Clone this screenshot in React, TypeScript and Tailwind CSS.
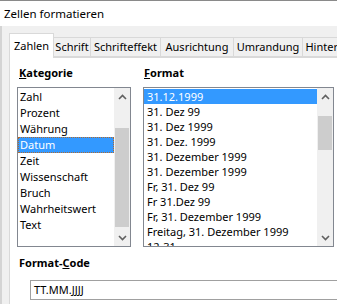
const kategorien = ["Zahl", "Prozent", "Währung", "Datum", "Zeit", "Wissenschaft", "Bruch", "Wahrheitswert", "Text"];
const formate = [
  "31.12.1999",
  "31. Dez 99",
  "31. Dez 1999",
  "31. Dez. 1999",
  "31. Dezember 1999",
  "31. Dezember 1999",
  "Fr, 31. Dez 99",
  "Fr 31.Dez 99",
  "Fr, 31. Dezember 1999",
  "Freitag, 31. Dezember 1999",
  "12-31",
];
const tabs = [
  { t: "Schrift", w: "w-[37px]" },
  { t: "Schrifteffekt", w: "w-[70px]" },
  { t: "Ausrichtung", w: "w-[73px]" },
  { t: "Umrandung", w: "w-[69px]" },
  { t: "Hintergrund", w: "w-[70px]" },
];

function Arrow({ up }: { up?: boolean }) {
  return (
    <div className="flex h-[17px] items-center justify-center">
      <svg width="9" height="6" viewBox="0 0 9 6">
        <polyline
          points={up ? "1,5 4.5,1.5 8,5" : "1,1 4.5,4.5 8,1"}
          fill="none"
          stroke="#606060"
          strokeWidth="1.6"
        />
      </svg>
    </div>
  );
}

function Scrollbar({ top, size }: { top: string; size: string }) {
  return (
    <div className="flex w-[16px] flex-col bg-[#f0f0f0]">
      <Arrow up />
      <div className="flex-1">
        <div className={`${top} ${size} mx-px bg-[#cdcdcd]`} />
      </div>
      <Arrow />
    </div>
  );
}

export default function App() {
  return (
    <div
      className="flex h-[304px] w-[337px] flex-col overflow-hidden bg-white text-[11px] text-black"
      style={{ fontFamily: '"Noto Sans", sans-serif' }}
    >
      <div className="h-[26px] shrink-0 border-t border-[#8a8a8a] bg-white pl-[4px] pt-[5px] text-[11.5px] leading-[16px]">
        Zellen formatieren
      </div>
      <div className="flex flex-1 flex-col border-l-2 border-[#d4d4d4] bg-[#f0f0f0] pl-[7px] pt-[7px]">
        <div className="flex h-[24px] items-end">
          <div className="relative z-10 -mb-px flex h-[25px] w-[45px] shrink-0 items-center justify-center border border-b-0 border-[#d9d9d9] bg-white">
            Zahlen
          </div>
          {tabs.map(({ t, w }) => (
            <div
              key={t}
              className={`flex h-[20px] shrink-0 items-center justify-center whitespace-nowrap border border-l-0 border-[#d9d9d9] bg-[#f0f0f0] ${w}`}
            >
              {t}
            </div>
          ))}
        </div>
        <div className="flex-1 border-l border-t border-[#d9d9d9] bg-white pl-[7px] pt-[7px]">
          <div className="flex gap-[12px]">
            <div className="flex w-[114px] flex-col">
              <div className="pl-[2px] font-bold leading-[16px]">
                <span className="underline">K</span>ategorie
              </div>
              <div className="mt-[6px] flex h-[160px] border border-[#828790]">
                <div className="flex-1 pt-px">
                  {kategorien.map((k) => (
                    <div
                      key={k}
                      className={`h-[16px] pl-[2px] leading-[16px] ${
                        k === "Datum" ? "bg-[#3399ff] text-white outline-1 outline-dotted -outline-offset-1 outline-[#b06a30]" : ""
                      }`}
                    >
                      {k}
                    </div>
                  ))}
                </div>
                <Scrollbar top="mt-[23px]" size="h-[99px]" />
              </div>
            </div>
            <div className="flex w-[191px] flex-col">
              <div className="pl-px font-bold leading-[16px]">
                <span className="underline">F</span>ormat
              </div>
              <div className="mt-[6px] flex h-[160px] border border-[#828790]">
                <div className="flex-1 overflow-hidden pt-px">
                  {formate.map((f, i) => (
                    <div
                      key={i}
                      className={`h-[15px] whitespace-nowrap pl-[3px] leading-[15px] ${
                        i === 0 ? "bg-[#3399ff] text-white" : ""
                      }`}
                    >
                      {f}
                    </div>
                  ))}
                </div>
                <Scrollbar top="mt-[11px]" size="h-[34px]" />
              </div>
            </div>
          </div>
          <div className="mt-[8px] pl-[2px] font-bold leading-[16px]">
            Format-<span className="underline">C</span>ode
          </div>
          <div className="ml-[13px] mt-[9px] flex h-[20px] items-center border border-r-0 border-[#a0a0a0] pl-[3px]">
            TT.MM.JJJJ
          </div>
        </div>
      </div>
    </div>
  );
}
